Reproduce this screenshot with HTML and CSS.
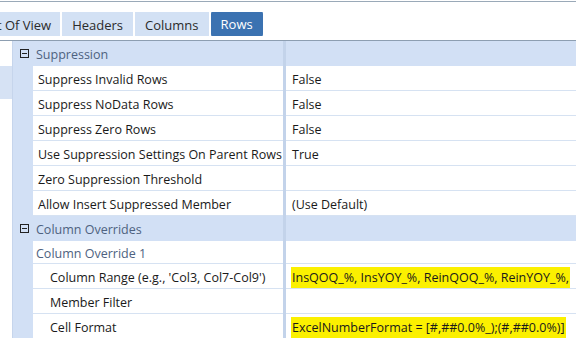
FILE: index.html
```html
<!DOCTYPE html>
<html>
<head>
<meta charset="utf-8">
<title>Rows</title>
<link rel="stylesheet" href="styles.css">
</head>
<body>
	<div class="topline"></div>

	<!-- TAB STRIP -->
	<div class="tabs">
		<div class="tab first">Point Of View</div>
		<div class="tab">Headers</div>
		<div class="tab">Columns</div>
		<div class="tab selected">Rows</div>
	</div>

	<div class="main">
		<div class="side">
			<div class="side-gap"></div>
			<div class="side-sel"></div>
		</div>

		<!-- PROPERTY GRID -->
		<div class="grid">
			<div class="row head">
				<div class="ind"><span class="toggle"></span></div>
				<div class="name">Suppression</div>
				<div class="sep"></div>
				<div class="val"></div>
			</div>
			<div class="row">
				<div class="ind"></div>
				<div class="name">Suppress Invalid Rows</div>
				<div class="sep"></div>
				<div class="val">False</div>
			</div>
			<div class="row">
				<div class="ind"></div>
				<div class="name">Suppress NoData Rows</div>
				<div class="sep"></div>
				<div class="val">False</div>
			</div>
			<div class="row">
				<div class="ind"></div>
				<div class="name">Suppress Zero Rows</div>
				<div class="sep"></div>
				<div class="val">False</div>
			</div>
			<div class="row">
				<div class="ind"></div>
				<div class="name">Use Suppression Settings On Parent Rows</div>
				<div class="sep"></div>
				<div class="val">True</div>
			</div>
			<div class="row">
				<div class="ind"></div>
				<div class="name">Zero Suppression Threshold</div>
				<div class="sep"></div>
				<div class="val"></div>
			</div>
			<div class="row">
				<div class="ind"></div>
				<div class="name">Allow Insert Suppressed Member</div>
				<div class="sep"></div>
				<div class="val">(Use Default)</div>
			</div>
			<div class="row head">
				<div class="ind"><span class="toggle"></span></div>
				<div class="name">Column Overrides</div>
				<div class="sep"></div>
				<div class="val"></div>
			</div>
			<div class="row group short">
				<div class="ind"></div>
				<div class="name">Column Override 1</div>
				<div class="sep"></div>
				<div class="val"></div>
			</div>
			<div class="row sub">
				<div class="ind"></div>
				<div class="name">Column Range (e.g., 'Col3, Col7-Col9')</div>
				<div class="sep"></div>
				<div class="val"><span class="mark">InsQOQ_%, InsYOY_%, ReinQOQ_%, ReinYOY_%,</span></div>
			</div>
			<div class="row sub">
				<div class="ind"></div>
				<div class="name">Member Filter</div>
				<div class="sep"></div>
				<div class="val"></div>
			</div>
			<div class="row sub">
				<div class="ind"></div>
				<div class="name">Cell Format</div>
				<div class="sep"></div>
				<div class="val"><span class="mark">ExcelNumberFormat = [#,##0.0%_);(#,##0.0%)]</span></div>
			</div>
		</div>
	</div>
</body>
</html>
```

FILE: styles.css
```css
body {
    margin: 0;
    padding-top: 1px;
    width: 576px;
    height: 338px;
    overflow: hidden;
    background-color: white;
    font-family: "Open Sans", "Noto Sans", sans-serif;
    font-size: 12.5px;
    color: #1a1a1a;
}

.topline {
    border-top: 1px solid #9aa9b8;
}

.tabs {
    display: flex;
    gap: 2px;
    margin-top: 10px;
    height: 24px;
    overflow: hidden;
}

.tab {
    box-sizing: border-box;
    flex: none;
    display: flex;
    align-items: center;
    padding: 2px 10px 0 10px;
    background-color: #d3e1f4;
    color: #2b2b2b;
    font-size: 13px;
}

.tab.first {
    margin-left: -40px;
    padding: 2px 9px 0 10px;
}

.tab.selected {
    margin-top: -1px;
    height: 26px;
    background-color: #3b72b1;
    color: white;
    border-radius: 3px;
    padding: 0 10px 1px 10px;
}

.main {
    display: flex;
    margin-top: 4px;
    border-top: 1px solid #8d9eb1;
}

.side {
    width: 12px;
    flex: none;
}

.side-gap {
    height: 25px;
}

.side-sel {
    height: 33px;
    background-color: #d6e2f4;
}

.grid {
    flex: 1;
    border-left: 1px solid #c6d5ec;
}

.row {
    display: flex;
    height: 25px;
}

.row.short {
    height: 23px;
}

.ind {
    width: 20px;
    flex: none;
    background-color: #d2e0f5;
    display: flex;
    align-items: center;
    justify-content: center;
}

.name {
    box-sizing: border-box;
    width: 250px;
    flex: none;
    padding-left: 5px;
    padding-top: 2px;
    display: flex;
    align-items: center;
    white-space: nowrap;
    overflow: hidden;
    border-bottom: 1px solid #d6e2f2;
}

.sep {
    width: 3px;
    flex: none;
    background-color: #c3d3ea;
}

.val {
    flex: 1;
    padding-left: 6px;
    padding-top: 2px;
    display: flex;
    align-items: center;
    white-space: nowrap;
    overflow: hidden;
    border-bottom: 1px solid #d6e2f2;
}

.head .name,
.head .val {
    background-color: #d2e0f5;
    color: #4e6280;
    padding-left: 3px;
    border-bottom: none;
}

.head .val {
    padding-left: 0;
}

.group .name {
    color: #4e6280;
    padding-left: 3px;
}

.sub .name {
    padding-left: 17px;
}

.toggle {
    width: 7px;
    height: 7px;
    border: 1px solid #222;
    position: relative;
    margin-left: 2px;
}

.toggle::after {
    content: "";
    position: absolute;
    left: 1px;
    right: 1px;
    top: 3px;
    height: 1px;
    background-color: #222;
}

.mark {
    background-color: #fbf000;
    padding: 2px 1px;
    margin-left: -1px;
}
```
